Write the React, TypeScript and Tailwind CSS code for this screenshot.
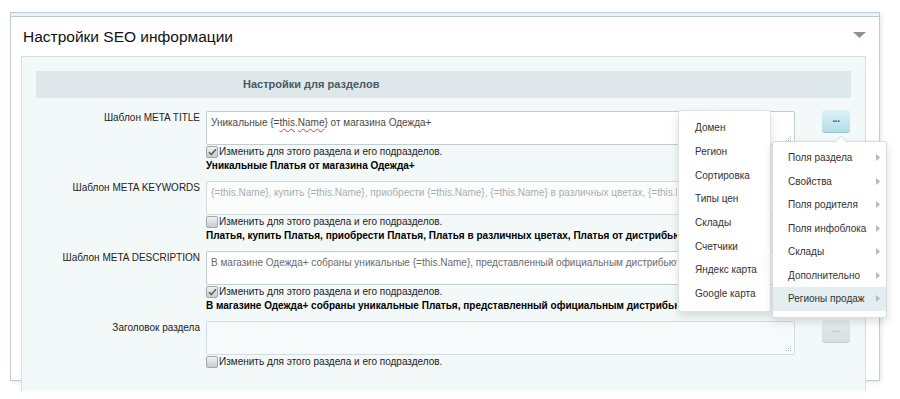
import React from "react";

interface SeoRow {
  label: string;
  value: React.ReactNode;
  valueClass: string;
  boxClass: string;
  checked: boolean;
  preview?: string;
  button?: "active" | "idle" | "none";
}

const rows: SeoRow[] = [
  {
    label: "Шаблон META TITLE",
    value: (
      <>
        Уникальные {"{="}
        <span className="underline decoration-wavy decoration-[#e23b3b] decoration-1 underline-offset-2">this</span>.
        <span className="underline decoration-wavy decoration-[#e23b3b] decoration-1 underline-offset-2">Name</span>
        {"}"} от магазина Одежда+
      </>
    ),
    valueClass: "text-[#4a4a4a]",
    boxClass: "bg-white border-[#c3ccd1]",
    checked: true,
    preview: "Уникальные Платья от магазина Одежда+",
    button: "active",
  },
  {
    label: "Шаблон META KEYWORDS",
    value:
      "{=this.Name}, купить {=this.Name}, приобрести {=this.Name}, {=this.Name} в различных цветах, {=this.Name} от дистрибьютора",
    valueClass: "text-[#a9adb0]",
    boxClass: "bg-[#fbfdfd] border-[#d3dadd]",
    checked: false,
    preview:
      "Платья, купить Платья, приобрести Платья, Платья в различных цветах, Платья от дистрибьютора",
    button: "none",
  },
  {
    label: "Шаблон META DESCRIPTION",
    value:
      "В магазине Одежда+ собраны уникальные {=this.Name}, представленный официальным дистрибьютором",
    valueClass: "text-[#6b6b6b]",
    boxClass: "bg-white border-[#c3ccd1]",
    checked: true,
    preview:
      "В магазине Одежда+ собраны уникальные Платья, представленный официальным дистрибьютором",
    button: "none",
  },
  {
    label: "Заголовок раздела",
    value: "",
    valueClass: "text-[#6b6b6b]",
    boxClass: "bg-[#f6fafb] border-[#d3dde1]",
    checked: false,
    button: "idle",
  },
];

const subItems = [
  "Домен",
  "Регион",
  "Сортировка",
  "Типы цен",
  "Склады",
  "Счетчики",
  "Яндекс карта",
  "Google карта",
];

const mainItems = [
  "Поля раздела",
  "Свойства",
  "Поля родителя",
  "Поля инфоблока",
  "Склады",
  "Дополнительно",
  "Регионы продаж",
];

const Checkbox = ({ checked }: { checked: boolean }) => (
  <span className="w-[12px] h-[12px] rounded-[2px] border border-[#a3a7aa] bg-gradient-to-b from-[#f2f2f2] to-[#c9cbcc] flex items-center justify-center shrink-0">
    {checked && (
      <svg width="9" height="8" viewBox="0 0 9 8">
        <path d="M1 4.2 L3.3 6.5 L8 1.2" fill="none" stroke="#555" strokeWidth="1.4" />
      </svg>
    )}
  </span>
);

const Grip = () => (
  <svg className="absolute right-[2px] bottom-[2px]" width="6" height="6" viewBox="0 0 6 6">
    <rect x="4" y="0" width="1" height="1" fill="#b9c0c4" />
    <rect x="2" y="2" width="1" height="1" fill="#b9c0c4" />
    <rect x="4" y="2" width="1" height="1" fill="#b9c0c4" />
    <rect x="0" y="4" width="1" height="1" fill="#b9c0c4" />
    <rect x="2" y="4" width="1" height="1" fill="#b9c0c4" />
    <rect x="4" y="4" width="1" height="1" fill="#b9c0c4" />
  </svg>
);

// the popup menus cover everything right of x=678, so long texts stop there
const Row = ({ row }: { row: SeoRow }) => (
  <div className="flex items-start h-[70px]">
    <div className="w-[164px] text-right text-[10px] leading-[13px] text-[#222] whitespace-nowrap">
      {row.label}
    </div>
    <div className="ml-[6px] w-[589px] shrink-0">
      <div
        className={`relative h-[34px] border rounded-[2px] px-[4px] pt-[4px] text-[10px] leading-[14px] ${row.boxClass} ${row.valueClass}`}
      >
        <div className="w-[466px] h-[26px] whitespace-nowrap overflow-hidden">{row.value}</div>
        <Grip />
      </div>
      <div className="flex items-center h-[14px] text-[10px] leading-[14px] text-[#222]">
        <Checkbox checked={row.checked} />
        <span className="ml-[1px]">Изменить для этого раздела и его подразделов.</span>
      </div>
      {row.preview && (
        <div className="w-[471px] h-[14px] text-[10px] leading-[14px] font-bold text-black whitespace-nowrap overflow-hidden">
          {row.preview}
        </div>
      )}
    </div>
    {row.button === "active" && (
      <div className="ml-[27px] -mt-[1px] w-[28px] h-[23px] rounded-[3px] bg-gradient-to-b from-[#dcf2f7] to-[#b4dde8] border-b border-[#9cc7d3] flex items-center justify-center text-[10px] leading-none text-[#3c5a66] font-bold tracking-[-0.5px] pb-[4px]">
        ...
      </div>
    )}
    {row.button === "idle" && (
      <div className="ml-[27px] -mt-[1px] w-[28px] h-[23px] rounded-[3px] bg-gradient-to-b from-[#e4ecee] to-[#d5dfe2] border-b border-[#c3cfd3] flex items-center justify-center text-[10px] leading-none text-[#9aa7ad] pb-[4px]">
        ...
      </div>
    )}
  </div>
);

const Arrow = () => (
  <svg width="4" height="7" viewBox="0 0 4 7">
    <path d="M0 0 L4 3.5 L0 7 Z" fill="#b3b9bd" />
  </svg>
);

export default function App() {
  return (
    <div className="relative w-[900px] h-[399px] bg-white font-['Liberation_Sans',Arial,sans-serif] pt-[12px] pl-[10px]">
      <div className="w-[870px] h-[369px] border-x border-b border-[#c2ccd6] shadow-[2px_2px_4px_rgba(0,0,0,0.08)] flex flex-col">
        <div className="h-[5px] border-t border-b border-[#bcc8d4] bg-[#edf1f5] shrink-0" />
        <div className="h-[39px] flex items-center justify-between pl-[12px] pr-[13px] shrink-0">
          <span className="text-[15.5px] text-[#111] leading-none">
            Настройки SEO информации
          </span>
          <svg width="13" height="6" viewBox="0 0 13 6" className="-mt-[4px]">
            <path d="M0 0 H13 L6.5 6 Z" fill="#8c9398" />
          </svg>
        </div>
        <div className="ml-[10px] w-[845px] flex-1 bg-[#f3f8f9] border-x border-t border-[#d3dfe4] px-[14px] pt-[14px]">
          <div className="h-[27px] bg-[#dee8eb] flex items-center pl-[207px] text-[11px] font-bold text-[#4b5960]">
            Настройки для разделов
          </div>
          <div className="pt-[13px]">
            {rows.map((row) => (
              <Row key={row.label} row={row} />
            ))}
          </div>
        </div>
      </div>

      {/* sub menu: Регионы продаж */}
      <div className="absolute left-[678px] top-[110px] w-[93px] h-[202px] bg-white border border-[#dde3e6] rounded-[3px] shadow-[0_4px_10px_rgba(0,0,0,0.13)] pt-[5px] z-10">
        {subItems.map((item) => (
          <div
            key={item}
            className="h-[23.7px] flex items-center pl-[16px] text-[10px] text-[#333] whitespace-nowrap"
          >
            {item}
          </div>
        ))}
      </div>

      {/* main popup */}
      <div className="absolute left-[772px] top-[141px] w-[115px] h-[177px] bg-white border border-[#d5dde1] rounded-[2px] shadow-[0_4px_10px_rgba(0,0,0,0.13)] pt-[4px] z-10">
        <svg className="absolute left-[62px] -top-[7px]" width="12" height="8" viewBox="0 0 12 8">
          <path d="M0 7.5 L6 1 L12 7.5" fill="#fff" stroke="#d5dde1" strokeWidth="1" />
          <rect x="0.5" y="7" width="11" height="1.5" fill="#fff" />
        </svg>
        {mainItems.map((item, i) => (
          <div
            key={item}
            className={`h-[23.5px] flex items-center justify-between pl-[15px] pr-[6px] text-[10px] text-[#333] whitespace-nowrap ${
              i === mainItems.length - 1 ? "bg-[#e4eef1]" : ""
            }`}
          >
            <span>{item}</span>
            <Arrow />
          </div>
        ))}
      </div>
    </div>
  );
}
